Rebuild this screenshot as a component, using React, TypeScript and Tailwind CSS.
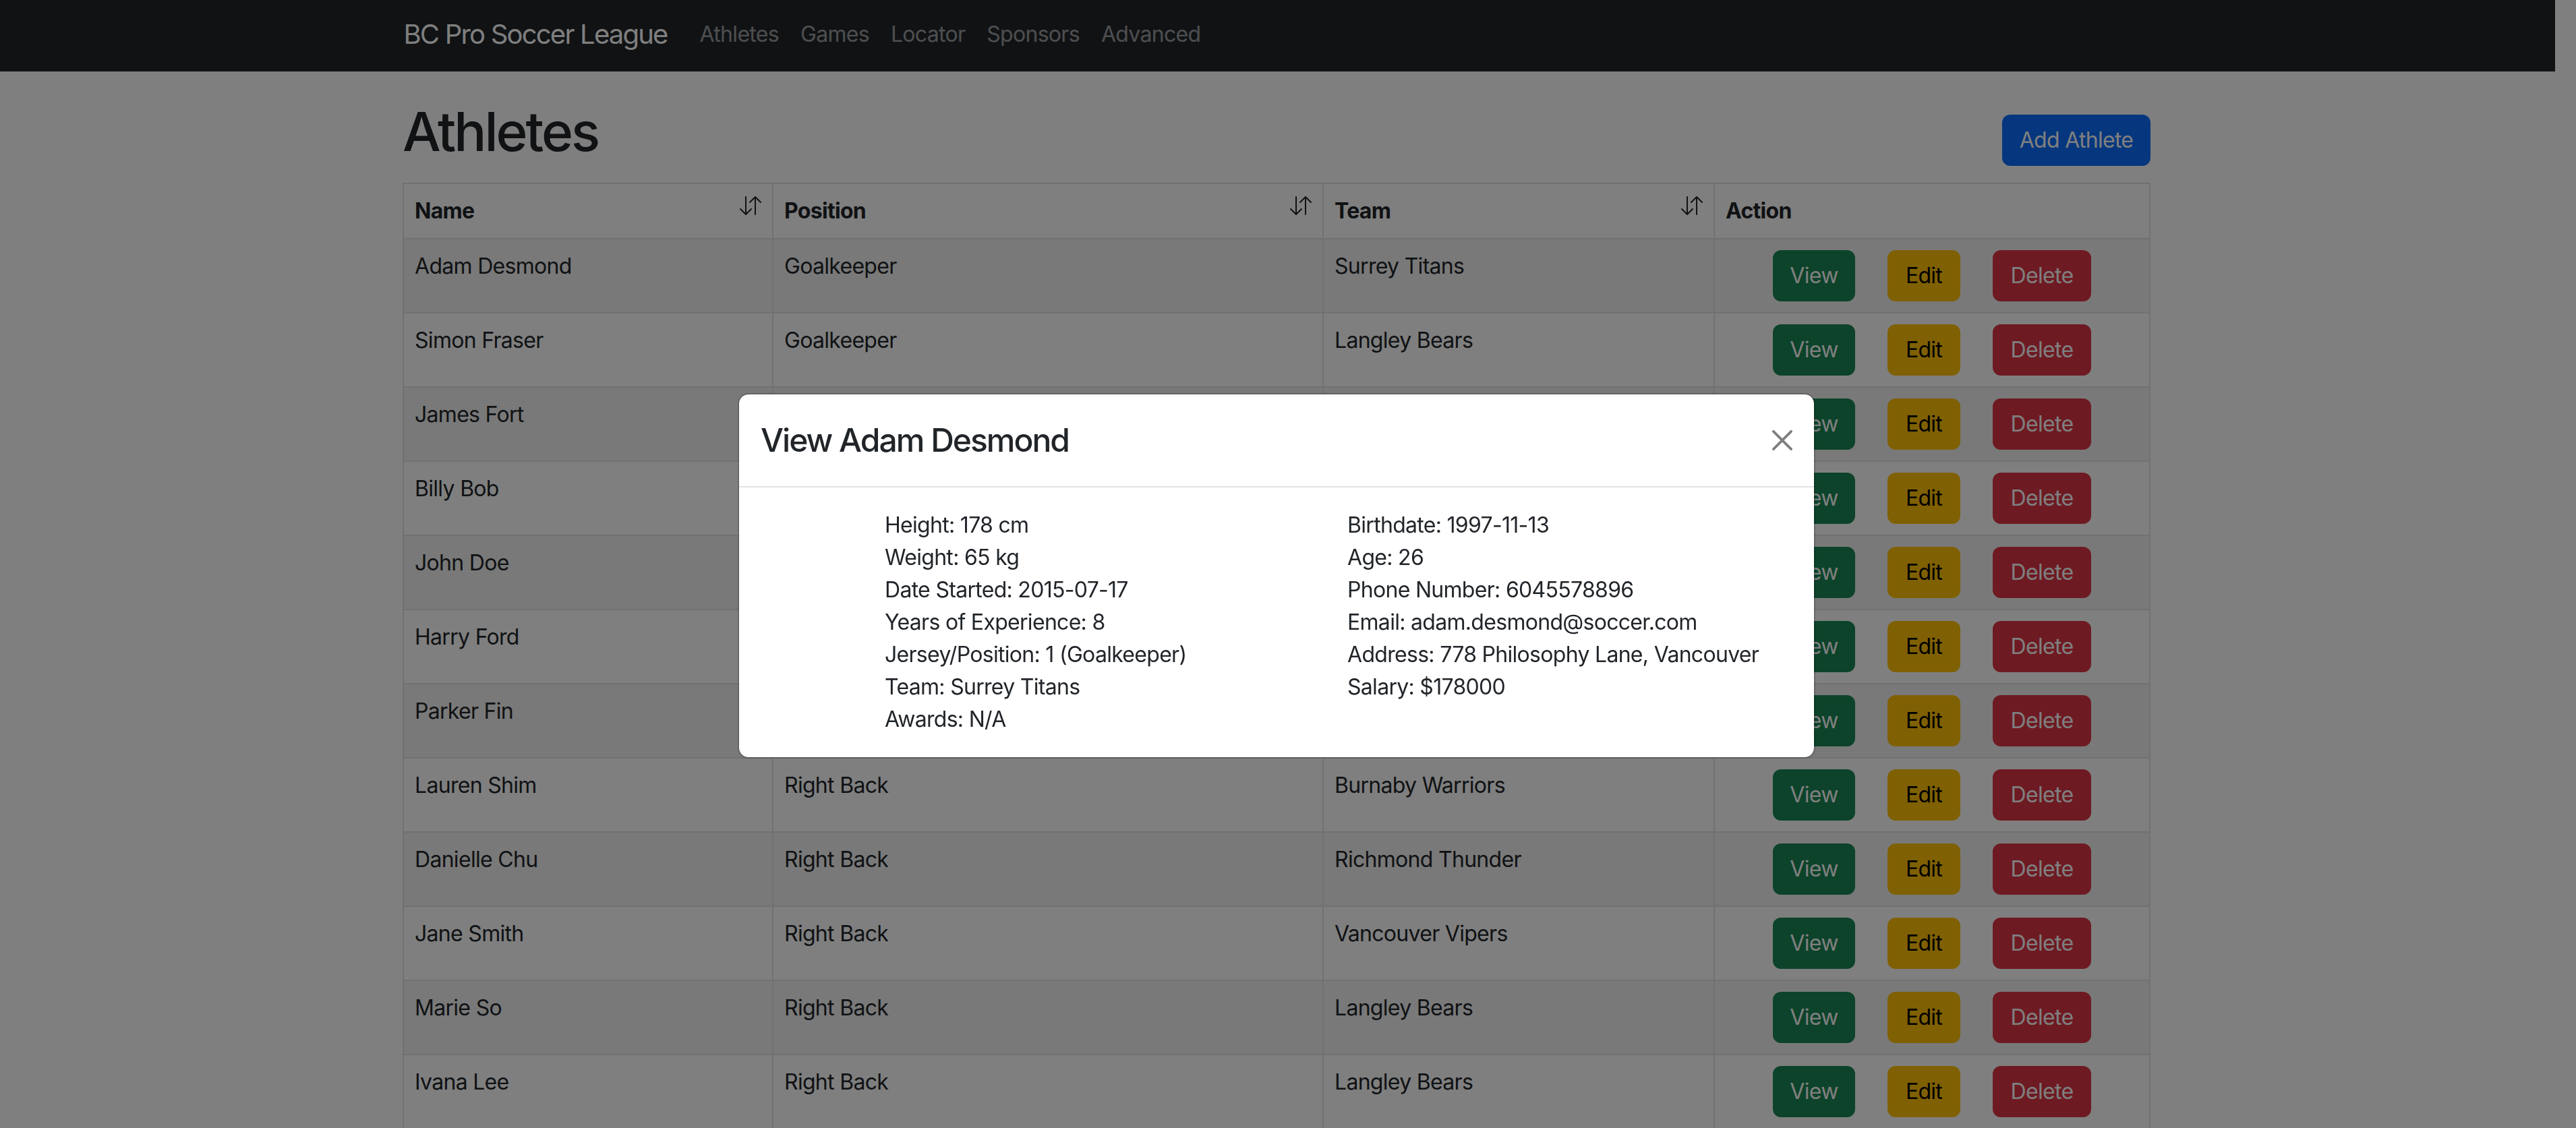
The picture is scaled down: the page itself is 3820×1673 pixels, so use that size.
import React from "react";

const rows: [string, string, string][] = [
  ["Adam Desmond", "Goalkeeper", "Surrey Titans"],
  ["Simon Fraser", "Goalkeeper", "Langley Bears"],
  ["James Fort", "Left Back", "Richmond Thunder"],
  ["Billy Bob", "Left Back", "Burnaby Warriors"],
  ["John Doe", "Centre Back", "Vancouver Vipers"],
  ["Harry Ford", "Centre Back", "Surrey Titans"],
  ["Parker Fin", "Right Back", "Langley Bears"],
  ["Lauren Shim", "Right Back", "Burnaby Warriors"],
  ["Danielle Chu", "Right Back", "Richmond Thunder"],
  ["Jane Smith", "Right Back", "Vancouver Vipers"],
  ["Marie So", "Right Back", "Langley Bears"],
  ["Ivana Lee", "Right Back", "Langley Bears"],
];

const links = ["Athletes", "Games", "Locator", "Sponsors", "Advanced"];

function SortIcon() {
  return (
    <svg
      className="float-right h-[32px] w-[32px]"
      viewBox="0 0 16 16"
      fill="currentColor"
    >
      <path
        fillRule="evenodd"
        d="M11.5 15a.5.5 0 0 0 .5-.5V2.707l3.146 3.147a.5.5 0 0 0 .708-.708l-4-4a.5.5 0 0 0-.708 0l-4 4a.5.5 0 1 0 .708.708L11 2.707V14.5a.5.5 0 0 0 .5.5m-7-14a.5.5 0 0 1 .5.5v11.793l3.146-3.147a.5.5 0 0 1 .708.708l-4 4a.5.5 0 0 1-.708 0l-4-4a.5.5 0 0 1 .708-.708L4 13.293V1.5a.5.5 0 0 1 .5-.5"
      />
    </svg>
  );
}

const left = [
  "Height: 178 cm",
  "Weight: 65 kg",
  "Date Started: 2015-07-17",
  "Years of Experience: 8",
  "Jersey/Position: 1 (Goalkeeper)",
  "Team: Surrey Titans",
  "Awards: N/A",
];
const right = [
  "Birthdate: 1997-11-13",
  "Age: 26",
  "Phone Number: 6045578896",
  "Email: adam.desmond@soccer.com",
  "Address: 778 Philosophy Lane, Vancouver",
  "Salary: $178000",
];

export default function App() {
  return (
    <div className="relative h-[1673px] w-full overflow-hidden bg-white pr-[34px] font-[Inter,sans-serif] text-[32px] leading-[48px] tracking-[-0.7px] text-[#212529]">
      <nav className="mr-[-3px] flex h-[106px] items-center bg-[#212529] pb-[5px]">
        <div className="mx-auto flex w-[2592px] items-center">
          <span className="mr-[32px] text-[40px] leading-[60px] tracking-[-1.8px] text-white">
            BC Pro Soccer League
          </span>
          <ul className="flex">
            {links.map((l) => (
              <li key={l} className="px-[16px] leading-[48px] tracking-[-0.7px] text-white/55">
                {l}
              </li>
            ))}
          </ul>
        </div>
      </nav>

      <main className="mx-auto w-[2592px]">
        <div className="flex items-start justify-between pt-[41px]">
          <h1 className="text-[80px] font-medium leading-[96px] tracking-[-3px]">Athletes</h1>
          <button className="mt-[23px] h-[76px] w-[220px] rounded-[12px] bg-[#0d6efd] text-[32px] leading-[48px] text-white">
            Add Athlete
          </button>
        </div>

        <table className="mt-[25px] w-full table-fixed border-collapse">
          <colgroup>
            <col className="w-[548px]" />
            <col className="w-[816px]" />
            <col className="w-[580px]" />
            <col />
          </colgroup>
          <thead>
            <tr className="bg-white">
              {["Name", "Position", "Team"].map((h) => (
                <th
                  key={h}
                  className="border-2 border-[#dee2e6] px-[16px] py-[16px] text-left align-top font-bold leading-[48px]"
                >
                  <SortIcon />
                  {h}
                </th>
              ))}
              <th className="border-2 border-[#dee2e6] px-[16px] py-[16px] text-left align-top font-bold leading-[48px]">
                Action
              </th>
            </tr>
          </thead>
          <tbody>
            {rows.map((r, i) => (
              <tr key={r[0]} className={i % 2 === 0 ? "bg-[#f2f2f2]" : "bg-white"}>
                <td className="border-2 border-[#dee2e6] px-[16px] py-[16px] align-top">{r[0]}</td>
                <td className="border-2 border-[#dee2e6] px-[16px] py-[16px] align-top">{r[1]}</td>
                <td className="border-2 border-[#dee2e6] px-[16px] py-[16px] align-top">{r[2]}</td>
                <td className="border-2 border-[#dee2e6] px-[16px] py-[16px] align-top">
                  <div className="flex justify-center gap-[48px]">
                    <button className="h-[76px] w-[122px] rounded-[12px] bg-[#198754] text-white">
                      View
                    </button>
                    <button className="h-[76px] w-[108px] rounded-[12px] bg-[#ffc107] text-black">
                      Edit
                    </button>
                    <button className="h-[76px] w-[146px] rounded-[12px] bg-[#dc3545] text-white">
                      Delete
                    </button>
                  </div>
                </td>
              </tr>
            ))}
          </tbody>
        </table>
      </main>

      <div className="fixed inset-0 bg-black/50" />

      <div className="fixed inset-0 flex items-start justify-center pr-[34px] pt-[583px]">
        <div className="w-[1598px] rounded-[16px] border-2 border-black/[0.175] bg-white bg-clip-padding">
          <div className="flex items-center justify-between border-b-2 border-[#dee2e6] p-[32px]">
            <div className="text-[48px] font-medium leading-[72px] tracking-[-2px]">View Adam Desmond</div>
            <svg className="h-[30px] w-[30px] opacity-50" viewBox="0 0 16 16" fill="#000">
              <path d="M.293.293a1 1 0 0 1 1.414 0L8 6.586 14.293.293a1 1 0 1 1 1.414 1.414L9.414 8l6.293 6.293a1 1 0 0 1-1.414 1.414L8 9.414l-6.293 6.293a1 1 0 0 1-1.414-1.414L6.586 8 .293 1.707a1 1 0 0 1 0-1.414z" />
            </svg>
          </div>
          <div className="flex p-[32px]">
            <div className="w-[870px] pl-[184px]">
              {left.map((t) => (
                <div key={t}>{t}</div>
              ))}
            </div>
            <div>
              {right.map((t) => (
                <div key={t}>{t}</div>
              ))}
            </div>
          </div>
        </div>
      </div>
    </div>
  );
}
